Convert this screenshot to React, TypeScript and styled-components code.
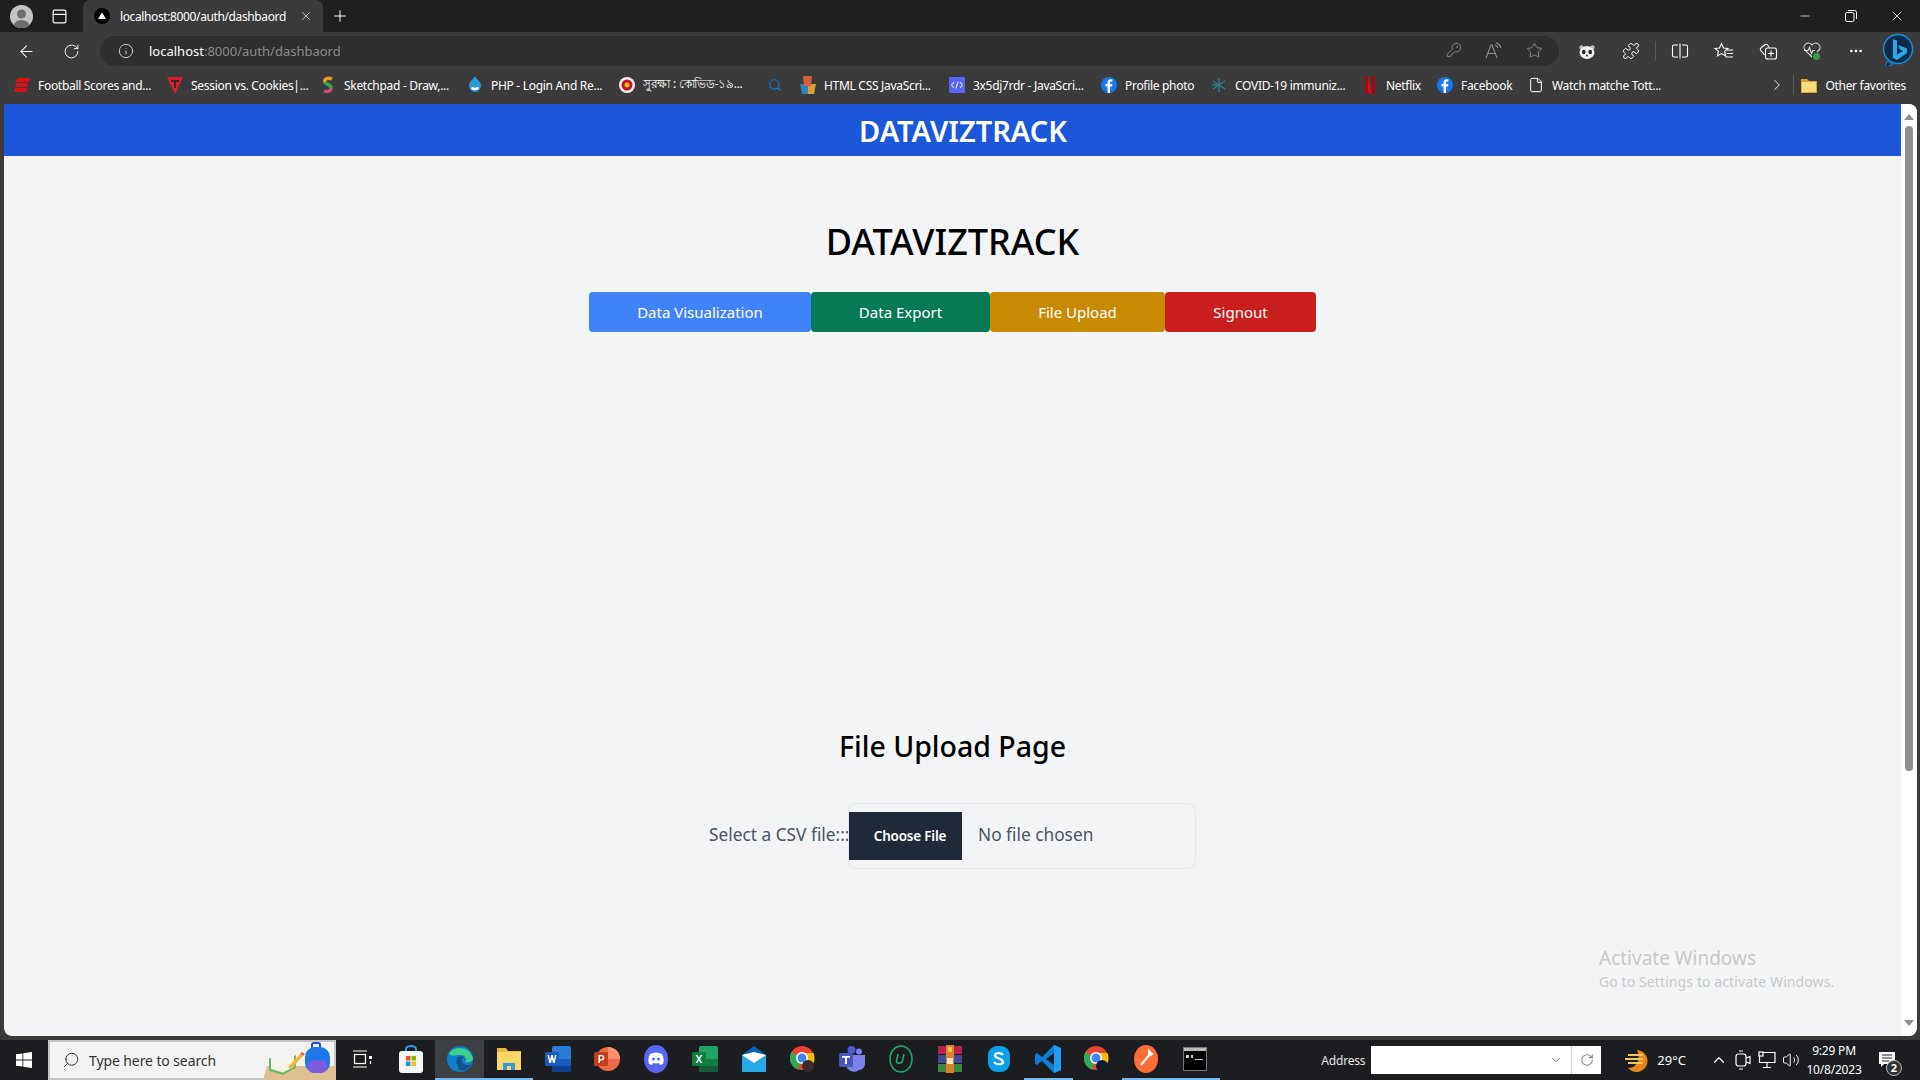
import React from "react";
import styled, { createGlobalStyle } from "styled-components";
import {
  ArrowLeft, RotateCw, Info, KeyRound, Star, Puzzle, Plus, X, Minus, ChevronRight, ChevronDown, ChevronUp,
  Search, File, Volume2, Ellipsis, PanelTop,
} from "lucide-react";

const GlobalStyle = createGlobalStyle`
  html, body { margin: 0; padding: 0; height: 100%; overflow: hidden; background: #3b3b3b; }
  * { box-sizing: border-box; }
  body { font-family: "Noto Sans", "Open Sans", Arial, sans-serif; }
`;

const Window = styled.div`
  width: 1920px;
  height: 1080px;
  display: flex;
  flex-direction: column;
  background: #3b3b3b;
  color: #fff;
`;

/* tab strip */
const TabStrip = styled.div`
  height: 32px;
  display: flex;
  align-items: flex-end;
  background: #1f1f1f;
`;
const StripLeft = styled.div`
  width: 83px;
  height: 32px;
  display: flex;
  align-items: center;
  padding-left: 10px;
  gap: 18px;
`;
const Avatar = styled.div`
  width: 23px;
  height: 23px;
  border-radius: 50%;
  overflow: hidden;
  background: #c4c4c4;
`;
const Tab = styled.div`
  width: 240px;
  height: 32px;
  display: flex;
  align-items: center;
  padding: 0 10px 0 11px;
  background: #3b3b3b;
  border-radius: 7px 7px 0 0;
  font-size: 12px;
`;
const TabTitle = styled.span`
  flex: 1;
  margin-left: 10px;
  letter-spacing: -0.38px;
  white-space: nowrap;
`;
const NewTab = styled.div`
  width: 34px;
  height: 32px;
  display: flex;
  align-items: center;
  justify-content: center;
`;
const WindowControls = styled.div`
  margin-left: auto;
  height: 32px;
  display: flex;
  align-items: center;
`;
const WinBtn = styled.div`
  width: 46px;
  display: flex;
  justify-content: center;
`;

/* toolbar */
const Toolbar = styled.div`
  height: 34px;
  display: flex;
  align-items: flex-end;
  padding-left: 4px;
  background: #3b3b3b;
`;
const NavBtn = styled.div`
  width: 45px;
  height: 30px;
  display: flex;
  align-items: center;
  justify-content: center;
`;
const AddressBar = styled.div`
  width: 1459px;
  height: 30px;
  margin-left: 6px;
  display: flex;
  align-items: center;
  padding: 0 5px 0 18px;
  border-radius: 15px;
  background: #2e2e2e;
`;
const Url = styled.div`
  margin-left: 15px;
  font-size: 13px;
  color: #8c8c8c;
  white-space: nowrap;
  b { font-weight: 400; color: #fff; }
`;
const AddressTools = styled.div`
  margin-left: auto;
  display: flex;
`;
const AddrBtn = styled.div`
  width: 40px;
  display: flex;
  justify-content: center;
  color: #8e8e8e;
`;
const ToolGroup = styled.div`
  display: flex;
  align-items: center;
  height: 30px;
  margin-left: 6px;
`;
const ToolBtn = styled.div<{ $w?: number }>`
  width: ${(p) => p.$w ?? 44}px;
  display: flex;
  justify-content: center;
  align-items: center;
`;
const ToolSep = styled.div`
  width: 1px;
  height: 20px;
  margin: 0 2px;
  background: #5a5a5a;
`;

/* bookmarks */
const Bookmarks = styled.div`
  height: 38px;
  display: flex;
  align-items: center;
  padding: 0 14px;
  background: #3b3b3b;
`;
const Bookmark = styled.div<{ $w?: number }>`
  width: ${(p) => (p.$w ? `${p.$w}px` : "auto")};
  flex: none;
  display: flex;
  align-items: center;
  gap: 8px;
  font-size: 12px;
  letter-spacing: -0.3px;
  white-space: nowrap;
`;
const BookmarkRight = styled.div`
  margin-left: auto;
  display: flex;
  align-items: center;
`;
const BarSep = styled.div`
  width: 1px;
  height: 20px;
  margin: 0 7px;
  background: #5a5a5a;
`;

/* page */
const Viewport = styled.div`
  height: 932px;
  margin: 0 3px 0 4px;
  display: flex;
  overflow: hidden;
  border-radius: 0 8px 8px 8px;
  background: #f3f4f6;
  position: relative;
`;
const Page = styled.main`
  flex: 1;
  display: flex;
  flex-direction: column;
  align-items: center;
  color: #000;
`;
const Header = styled.header`
  width: 100%;
  height: 52px;
  display: flex;
  align-items: center;
  justify-content: center;
  padding-left: 21px;
  background: #1c57d9;
  color: #fff;
  font-size: 29px;
  font-weight: 600;
`;
const Title = styled.h1`
  margin: 61px 0 0;
  height: 50px;
  line-height: 50px;
  font-size: 36px;
  font-weight: 500;
`;
const Nav = styled.nav`
  display: flex;
  margin-top: 25px;
`;
const NavButton = styled.button<{ $bg: string; $w: number }>`
  width: ${(p) => p.$w}px;
  height: 40px;
  border: 0;
  border-radius: 4px;
  background: ${(p) => p.$bg};
  color: #fff;
  font-family: inherit;
  font-size: 15px;
`;
const UploadTitle = styled.h2`
  margin: 394px 0 0;
  height: 40px;
  line-height: 40px;
  font-size: 28.5px;
  font-weight: 500;
`;
const UploadRow = styled.div`
  display: flex;
  align-items: center;
  margin-top: 37px;
  color: #4b5563;
  font-size: 17.3px;
`;
const CsvLabel = styled.label`
  width: 139px;
  padding-bottom: 3px;
  white-space: nowrap;
`;
const FileBox = styled.div`
  width: 348px;
  height: 66px;
  display: flex;
  align-items: center;
  border: 1px solid #e5e7eb;
  border-radius: 8px;
`;
const ChooseButton = styled.div`
  width: 113px;
  height: 48px;
  display: flex;
  align-items: center;
  justify-content: center;
  padding-left: 9px;
  background: #1f2937;
  color: #fff;
  font-size: 13.5px;
  font-weight: 600;
  letter-spacing: -0.2px;
`;
const NoFile = styled.span`
  margin-left: 16px;
  padding-bottom: 3px;
`;
const Scrollbar = styled.div`
  width: 16px;
  display: flex;
  flex-direction: column;
  align-items: center;
  background: #fff;
  border-radius: 0 8px 8px 0;
`;
const ScrollThumb = styled.div`
  width: 8px;
  height: 645px;
  margin-top: 6px;
  border-radius: 4px;
  background: #8f8f8f;
`;
const ArrowUp = styled.div`
  margin-top: 10px;
  border: 5px solid transparent;
  border-top: 0;
  border-bottom: 6px solid #8f8f8f;
`;
const ArrowDown = styled.div`
  margin-top: auto;
  margin-bottom: 10px;
  border: 5px solid transparent;
  border-bottom: 0;
  border-top: 6px solid #8f8f8f;
`;
const Watermark = styled.div`
  position: absolute;
  left: 1595px;
  top: 841px;
  color: #c6c8cb;
  font-size: 14px;
  letter-spacing: 0.1px;
  line-height: 19px;
  strong { display: block; font-weight: 400; font-size: 19px; letter-spacing: 0; line-height: 27px; }
`;

/* taskbar */
const Taskbar = styled.footer`
  height: 40px;
  margin-top: 4px;
  display: flex;
  align-items: center;
  background: #1b1d20;
`;
const Start = styled.div`
  width: 48px;
  display: flex;
  justify-content: center;
`;
const SearchBox = styled.div`
  width: 288px;
  height: 40px;
  display: flex;
  align-items: center;
  padding-left: 12px;
  gap: 9px;
  background: #f2f2f2;
  border: 2px solid #c4c4c4;
  color: #333;
  font-size: 14px;
  letter-spacing: -0.1px;
  position: relative;
`;
const SearchArt = styled.svg`
  position: absolute;
  right: -2px;
  bottom: -2px;
`;
const Apps = styled.div`
  display: flex;
  margin-left: 1px;
`;
const AppSlot = styled.div<{ $running?: boolean; $current?: boolean }>`
  width: 49.06px;
  height: 40px;
  display: flex;
  align-items: center;
  justify-content: center;
  background: ${(p) => (p.$current ? "#3e4144" : "transparent")};
  border-bottom: 2px solid ${(p) => (p.$running ? "#76b9ed" : "transparent")};
`;
const Tray = styled.div`
  margin-left: auto;
  display: flex;
  align-items: center;
  height: 40px;
`;
const AddressLabel = styled.span`
  font-size: 12px;
  letter-spacing: -0.2px;
  color: #e4e4e4;
  margin-right: 6px;
`;
const AddressInput = styled.div`
  width: 230px;
  height: 28px;
  display: flex;
  align-items: center;
  background: #fff;
  color: #555;
`;
const AddressDrop = styled.div`
  flex: 1;
  display: flex;
  justify-content: flex-end;
  padding-right: 8px;
`;
const AddressRefresh = styled.div`
  width: 30px;
  height: 28px;
  display: flex;
  align-items: center;
  justify-content: center;
  border-left: 1px solid #d9d9d9;
`;
const Weather = styled.div`
  display: flex;
  align-items: center;
  gap: 8px;
  margin-left: 24px;
  font-size: 13px;
`;
const TrayIcons = styled.div`
  display: flex;
  align-items: center;
  gap: 6px;
  margin-left: 24px;
`;
const Clock = styled.div`
  width: 70px;
  margin-left: -1px;
  text-align: center;
  font-size: 12px;
  letter-spacing: -0.2px;
  line-height: 19px;
`;
const Notify = styled.div`
  width: 40px;
  margin-right: 11px;
  position: relative;
  display: flex;
  justify-content: center;
  padding-right: 4px;
`;
const NotifyBadge = styled.span`
  position: absolute;
  left: 17px;
  top: 8px;
  width: 16px;
  height: 16px;
  border-radius: 50%;
  background: #333;
  border: 1px solid #bbb;
  font-size: 11px;
  font-weight: 700;
  line-height: 14px;
  text-align: center;
`;

/* favicons and logos */
const Fb = () => (
  <svg width="16" height="16" viewBox="0 0 16 16"><circle cx="8" cy="8" r="8" fill="#1877f2" /><path d="M9 16V9.5h2l.4-2.4H9V5.8c0-.8.3-1.2 1.2-1.2h1.2V2.5C11 2.4 10.3 2.3 9.700 2.300 7.800 2.300 6.600 3.400 6.600 5.500v1.600H4.500v2.400h2.100V16z" fill="#fff" /></svg>
);
const Espn = () => (
  <svg width="16" height="16" viewBox="0 0 16 16"><path d="M3 1h13l-1 4H2zM2 6h12l-.6 4H1zM1 11h12l-.8 4H0z" fill="#d8121a" /></svg>
);
const TIcon = () => (
  <svg width="16" height="18" viewBox="0 0 16 18"><path d="M0 1h16L8 18z" fill="#e01b2b" /><path d="M4 4h8v2H9v6H7V6H4z" fill="#2b2b2b" /></svg>
);
const Sketch = () => (
  <svg width="16" height="18" viewBox="0 0 16 18" fill="none" strokeWidth="3.500"><path d="M12 3C8 1 4 3 5 6" stroke="#e8a020" /><path d="M5 6c1 3 6 2 6 6" stroke="#3aa655" /><path d="M11 12c0 4-5 4-7 3" stroke="#d04a7a" /></svg>
);
const Drupal = () => (
  <svg width="16" height="18" viewBox="0 0 16 18"><path d="M8 0c1 3 6 5 6 10A6 6 0 0 1 2 10C2 5 7 3 8 0z" fill="#2b9bd7" /><path d="M4 12c2-2 3 0 4 0s2-2 4 0c-1 3-7 3-8 0z" fill="#fff" /></svg>
);
const Corona = () => (
  <svg width="16" height="16" viewBox="0 0 16 16"><circle cx="8" cy="8" r="8" fill="#f0f0f0" /><circle cx="8" cy="8" r="5.500" fill="#c8102e" /><circle cx="8" cy="8" r="2.500" fill="#f4c20d" /></svg>
);
const Html = () => (
  <svg width="16" height="18" viewBox="0 0 16 18"><path d="M0 8h9v10H2z" fill="#2f7fc1" /><path d="M8 8h8l-2 10H8z" fill="#d9a036" /><path d="M3 0h9l-1 10H4z" fill="#d4603c" /></svg>
);
const CodeIcon = () => (
  <svg width="16" height="16" viewBox="0 0 16 16"><rect width="16" height="16" rx="1" fill="#5865f2" /><path d="M5 5 2.500 8 5 11M11 5l2.500 3L11 11M9 4.500 7 11.500" stroke="#fff" fill="none" /></svg>
);
const Covid = () => (
  <svg width="16" height="16" viewBox="0 0 16 16" stroke="#2f7f8f" strokeWidth="1.400"><path d="M8 1v14M2 4l12 8M14 4 2 12M1 8h5" /></svg>
);
const Netflix = () => (
  <svg width="16" height="18" viewBox="0 0 16 18"><path d="M3 0h3l4 18H7z" fill="#e50914" /><path d="M3 0h3v17l-3 1zM10 0h3v18l-3-1z" fill="#a50710" /></svg>
);
const Folder = () => (
  <svg width="16" height="16" viewBox="0 0 16 16"><path d="M0 2h6l2 2h8v12H0z" fill="#d9a32e" /><rect x="1" y="5" width="14" height="10" fill="#f7dc7c" /></svg>
);
const Restore = () => (
  <svg width="12" height="12" viewBox="0 0 12 12" fill="none" stroke="#fff"><rect x=".5" y="2.500" width="8.500" height="9" rx="1.500" /><path d="M3 .5h6.500A2 2 0 0 1 11.500 2.500V9" /></svg>
);
const ReadAloud = () => (
  <svg width="18" height="18" viewBox="0 0 18 18" fill="none" stroke="#8e8e8e" strokeWidth="1.100"><path d="M1 16 6 3h1l5 13M3 11.500h7" /><path d="M10 3a5 5 0 0 1 3 3M11 .8a8 8 0 0 1 5 5" /></svg>
);
const Panda = () => (
  <svg width="18" height="16" viewBox="0 0 18 16"><circle cx="3.500" cy="4.500" r="2.200" fill="#bbb" /><circle cx="14.500" cy="4.500" r="2.200" fill="#bbb" /><ellipse cx="9" cy="9.500" rx="7.500" ry="6.500" fill="#eee" /><ellipse cx="5.800" cy="9" rx="1.800" ry="2.200" fill="#222" /><ellipse cx="12.200" cy="9" rx="1.800" ry="2.200" fill="#222" /><circle cx="9" cy="12.500" r=".9" fill="#222" /></svg>
);
const SplitScreen = () => (
  <svg width="18" height="18" viewBox="0 0 18 18" fill="none" stroke="#fff" strokeWidth="1.100"><path d="M7 3H3a1.500 1.500 0 0 0-1.500 1.500v9A1.500 1.500 0 0 0 3 15h4M11 3h4a1.500 1.500 0 0 1 1.500 1.500v9A1.500 1.500 0 0 1 15 15h-4M9 1.500v15" /></svg>
);
const Favorites = () => (
  <svg width="20" height="18" viewBox="0 0 20 18" fill="none" stroke="#fff" strokeWidth="1.100"><path d="M7.500 1.500 9.500 6l4.500.4-3.400 3 1 4.600-4.100-2.400L3.400 14l1-4.600L1 6.400 5.500 6zM13 8h6M12.500 11.500h6.500M11.500 15H19" /></svg>
);
const Collections = () => (
  <svg width="20" height="20" viewBox="0 0 20 20" fill="none" stroke="#fff" strokeWidth="1.100"><path d="M6.500 14 2.800 9.500a2 2 0 0 1 .3-2.800l3.700-3A2 2 0 0 1 9.500 4l2 2.500" /><rect x="7.500" y="7" width="11" height="11" rx="2" /><path d="M13 9.500v6M10 12.500h6" /></svg>
);
const Health = () => (
  <svg width="20" height="20" viewBox="0 0 20 20"><path d="M10 16 2.800 9A4.300 4.300 0 0 1 10 4a4.300 4.300 0 0 1 7.200 5L15 11" fill="none" stroke="#ddd" strokeWidth="1.100" /><path d="M2 9.500h4l1.500-3 2 6 1.500-3h2" fill="none" stroke="#ddd" strokeWidth="1.100" /><circle cx="14.500" cy="15.500" r="3.500" fill="#3a9a4a" /></svg>
);
const Bing = () => (
  <svg width="32" height="38" viewBox="0 0 32 38"><circle cx="16" cy="17" r="14.500" fill="#0c2a4a" stroke="#1c8ad6" strokeWidth="1.500" /><path d="M5 29 3 36l8-4z" fill="#0c2a4a" stroke="#1c8ad6" /><path d="M11 7l4 1.500v14l6-3.500-3-1.500-2-4.500 9 3.500v4.500L15 28l-4-2z" fill="#2aa7e6" /></svg>
);
const WinLogo = () => (
  <svg width="16" height="16" viewBox="0 0 16 16" fill="#fff"><path d="M0 2.300 6.500 1.400v6.200H0zM7.300 1.300 16 0v7.600H7.300zM0 8.400h6.500v6.200L0 13.700zM7.300 8.400H16V16l-8.700-1.200z" /></svg>
);
const Art = () => (
  <SearchArt width="78" height="38" viewBox="0 0 78 38">
    <path d="M5 38l4-14h69v14z" fill="#e0bf92" />
    <path d="M11 16l14 4 13-7v13l-13 7-14-4z" fill="#6fb86a" />
    <path d="M13 16l12 3.500 11-6v11l-11 6-12-3.500z" fill="#f4f4e8" />
    <path d="M30 25 42 12l3 2-12 13z" fill="#f2b632" />
    <path d="M42 12l2-2 3 2-2 2z" fill="#e8604c" />
    <rect x="54" y="1" width="8" height="6" rx="2" fill="none" stroke="#1c4fd0" strokeWidth="2" />
    <rect x="47" y="5" width="25" height="26" rx="10" fill="#1f78e8" />
    <rect x="50" y="18" width="19" height="13" rx="6" fill="#7e5ce0" />
  </SearchArt>
);
const TaskView = () => (
  <svg width="20" height="20" viewBox="0 0 20 20" fill="none" stroke="#fff" strokeWidth="1.200"><path d="M1 2h14M1 18h14" /><rect x="2.500" y="5.500" width="11" height="9" /><rect x="17" y="7" width="3" height="3" fill="#fff" stroke="none" /><path d="M18.500 12v3" /></svg>
);
const Store = () => (
  <svg width="24" height="28" viewBox="0 0 24 28"><path d="M7 7V4a5 3 0 0 1 10 0v3" stroke="#29a3e0" strokeWidth="2" fill="none" /><rect y="6" width="24" height="22" rx="3" fill="#f5f5f5" /><rect x="7" y="11" width="4.500" height="4.500" fill="#f25022" /><rect x="12.500" y="11" width="4.500" height="4.500" fill="#7fba00" /><rect x="7" y="16.500" width="4.500" height="4.500" fill="#00a4ef" /><rect x="12.500" y="16.500" width="4.500" height="4.500" fill="#ffb900" /></svg>
);
const Edge = () => (
  <svg width="26" height="26" viewBox="0 0 26 26"><circle cx="13" cy="13" r="13" fill="#0f7fc9" /><path d="M2 8C5 0 22-1 26 12c0 4-5 5-8 4 3-3 0-7-5-7-4 0-8 2-11-1z" fill="#3ccf8e" /><path d="M10 13c0-3 6-4 7-1-2 0-3 1-2 4 1 3 6 4 9 2-3 6-9 8-13 5 3 0-3-5-1-10z" fill="#1b4f8a" /></svg>
);
const Explorer = () => (
  <svg width="24" height="22" viewBox="0 0 24 22"><path d="M0 0h9l2 3h13v19H0z" fill="#e8b93c" /><rect y="4" width="24" height="18" fill="#f7d868" /><path d="M6 15h12v7H6z" fill="#3a9ad9" /><rect x="10" y="18" width="4" height="4" fill="#f7d868" /></svg>
);
const Word = () => (
  <svg width="26" height="26" viewBox="0 0 26 26"><rect x="7" width="19" height="26" rx="2" fill="#2b7cd3" /><rect x="7" y="13" width="19" height="7" fill="#185abd" /><rect x="7" y="20" width="19" height="6" fill="#103f91" /><rect y="6" width="14" height="14" rx="1.500" fill="#185abd" /><path d="M2.500 9h1.500l1 5 1.300-5h1.400l1.300 5 1-5h1.500l-1.800 8H8L7 12.500 6 17H4.300z" fill="#fff" /></svg>
);
const Ppt = () => (
  <svg width="26" height="26" viewBox="0 0 26 26"><circle cx="14" cy="13" r="12" fill="#ed6c47" /><path d="M14 1a12 12 0 0 1 12 12H14z" fill="#ff8f6b" /><rect x="0" y="6" width="14" height="14" rx="1.500" fill="#c43e1c" /><path d="M4.500 9h3a2.500 2.500 0 0 1 0 5.500H6V17H4.500zM6 10.300v2.900h1.300a1.450 1.450 0 0 0 0-2.900z" fill="#fff" /></svg>
);
const Discord = () => (
  <svg width="24" height="28" viewBox="0 0 24 28"><ellipse cx="12" cy="14" rx="12" ry="14" fill="#5865f2" /><path d="M6 9c4-2 8-2 12 0 2 4 2 7 1 10l-3 1-1-2c-2 .6-4 .6-6 0l-1 2-3-1C4 16 4 13 6 9z" fill="#fff" /><circle cx="9.500" cy="14" r="1.500" fill="#5865f2" /><circle cx="14.500" cy="14" r="1.500" fill="#5865f2" /></svg>
);
const Excel = () => (
  <svg width="26" height="26" viewBox="0 0 26 26"><rect x="7" width="19" height="26" rx="2" fill="#21a366" /><rect x="7" y="13" width="19" height="7" fill="#107c41" /><rect x="7" y="20" width="19" height="6" fill="#185c37" /><rect y="6" width="14" height="14" rx="1.500" fill="#107c41" /><path d="M3.500 9h1.800L7 11.800 8.700 9h1.800l-2.600 4 2.600 4H8.700L7 14.200 5.300 17H3.500l2.600-4z" fill="#fff" /></svg>
);
const Mail = () => (
  <svg width="24" height="26" viewBox="0 0 24 26"><path d="M12 0 24 9v17H0V9z" fill="#0364b8" /><rect y="9" width="24" height="17" fill="#28a8ea" /><path d="M0 9l12 8 12-8-12-3z" fill="#fff" /></svg>
);
const Chrome = ({ badge }: { badge: string }) => (
  <svg width="26" height="28" viewBox="0 0 26 28"><circle cx="12" cy="13" r="12" fill="#ea4335" /><path d="M12 13 1.500 7A12 12 0 0 0 8 24.500z" fill="#34a853" /><path d="M12 13l4 11.500A12 12 0 0 0 23.500 8H12z" fill="#fbbc05" /><circle cx="12" cy="13" r="6" fill="#fff" /><circle cx="12" cy="13" r="4.500" fill="#4285f4" /><circle cx="18" cy="21" r="6" fill={badge} /></svg>
);
const Teams = () => (
  <svg width="26" height="26" viewBox="0 0 26 26"><circle cx="20" cy="5.500" r="3" fill="#7b83eb" /><circle cx="12.500" cy="4" r="4" fill="#5059c9" /><path d="M7 9h19v9a6 6 0 0 1-6 6 8 8 0 0 1-13-6z" fill="#7b83eb" /><rect y="7" width="14" height="14" rx="1.500" fill="#4b53bc" /><path d="M3 10h8v1.800H8V18H6v-6.200H3z" fill="#fff" /></svg>
);
const UIcon = () => (
  <svg width="24" height="28" viewBox="0 0 24 28" fill="none"><ellipse cx="12" cy="14" rx="11" ry="13" stroke="#17b26a" strokeWidth="1.500" /><path d="M9 9l-1.500 7c-.5 3 5 3 6 0L15 9" stroke="#17b26a" strokeWidth="1.500" /></svg>
);
const Rar = () => (
  <svg width="24" height="28" viewBox="0 0 24 28"><rect y="1" width="24" height="8" fill="#b8234a" /><rect y="10" width="24" height="8" fill="#45479b" /><rect y="19" width="24" height="8" fill="#3a8a3e" /><rect x="8" y="0" width="8" height="28" fill="#d9822b" /><rect x="9" y="13" width="6" height="6" fill="#f4e4c8" /><rect x="10" y="2" width="4" height="5" fill="#f2c14e" /></svg>
);
const Skype = () => (
  <svg width="22" height="26" viewBox="0 0 22 26"><rect width="22" height="26" rx="9" fill="#0aa0e6" /><path d="M15 9c-1-2-7-3-8 0-1 4 8 3 8 7 0 3-7 3-9 0" stroke="#fff" strokeWidth="2.200" fill="none" /></svg>
);
const VsCode = () => (
  <svg width="26" height="28" viewBox="0 0 26 28"><path d="M19 0l7 3v22l-7 3L7 16l-5 4-2-1.500V9.500L2 8l5 4z" fill="#0e7ed0" /><path d="M19 8 11 14l8 6z" fill="#1b1d20" /><path d="M19 0l7 3v22l-7 3z" fill="#1f9cf0" /></svg>
);
const Postman = () => (
  <svg width="24" height="28" viewBox="0 0 24 28"><ellipse cx="12" cy="14" rx="12" ry="14" fill="#ff6c37" /><path d="M7 20 16 9M15 6l3 3-3 2z" stroke="#fff" strokeWidth="2" fill="#fff" /></svg>
);
const Cmd = () => (
  <svg width="24" height="24" viewBox="0 0 24 24"><rect x=".5" y=".5" width="23" height="23" fill="#000" stroke="#777" /><rect x="1" y="1" width="22" height="3" fill="#bbb" /><path d="M3 8h3v3H3zM8 8h2v3H8zM12 12h8v1h-8z" fill="#ccc" /></svg>
);
const WeatherIcon = () => (
  <svg width="24" height="26" viewBox="0 0 24 26"><path d="M12 3A11 11 0 1 1 3 21C12 21 16 12 12 3z" fill="#e8861a" /><path d="M3 7h15v2H3zM0 11h18v2H0zM3 15h15v2H3z" fill="#f6c860" /></svg>
);
const MeetNow = () => (
  <svg width="18" height="20" viewBox="0 0 18 20" fill="none" stroke="#fff" strokeWidth="1.200"><rect x="2" y="4" width="10" height="12" rx="2.500" /><path d="M12 8l4-1.500v7L12 12M5 1h4M5 19h4" /></svg>
);
const Network = () => (
  <svg width="18" height="18" viewBox="0 0 18 18" fill="none" stroke="#fff" strokeWidth="1.200"><path d="M5 1.500h12v10H1.500V5M9 11.500V16M5 16.500h8" /><rect x="1" y="1" width="4" height="4" /></svg>
);
const ActionCenter = () => (
  <svg width="16" height="16" viewBox="0 0 16 16"><path d="M0 0h16v12H5l-3 3v-3H0z" fill="#fff" /><path d="M3 3h10M3 6h10M3 9h7" stroke="#1b1d20" /></svg>
);

const bookmarks: [React.ReactNode, string, number][] = [
  [<Espn />, "Football Scores and...", 153],
  [<TIcon />, "Session vs. Cookies|...", 153],
  [<Sketch />, "Sketchpad - Draw,...", 147],
  [<Drupal />, "PHP - Login And Re...", 152],
  [<Corona />, "সুরক্ষা : কোভিড-১৯...", 149],
  [<Search size={14} color="#1a78c2" />, "", 32],
  [<Html />, "HTML CSS JavaScri...", 149],
  [<CodeIcon />, "3x5dj7rdr - JavaScri...", 152],
  [<Fb />, "Profile photo", 110],
  [<Covid />, "COVID-19 immuniz...", 151],
  [<Netflix />, "Netflix", 75],
  [<Fb />, "Facebook", 91],
  [<File size={16} strokeWidth={1.5} />, "Watch matche Tott...", 0],
];

const apps: { icon: React.ReactNode; running?: boolean; current?: boolean }[] = [
  { icon: <TaskView /> },
  { icon: <Store /> },
  { icon: <Edge />, running: true, current: true },
  { icon: <Explorer />, running: true },
  { icon: <Word /> },
  { icon: <Ppt /> },
  { icon: <Discord /> },
  { icon: <Excel /> },
  { icon: <Mail /> },
  { icon: <Chrome badge="#3a2a28" /> },
  { icon: <Teams /> },
  { icon: <UIcon /> },
  { icon: <Rar /> },
  { icon: <Skype /> },
  { icon: <VsCode />, running: true },
  { icon: <Chrome badge="#10202c" /> },
  { icon: <Postman />, running: true },
  { icon: <Cmd />, running: true },
];

export default function App() {
  return (
    <Window>
      <GlobalStyle />
      <TabStrip>
        <StripLeft>
          <Avatar>
            <svg width="23" height="23" viewBox="0 0 23 23"><circle cx="11.500" cy="9" r="4.500" fill="#6d6d6d" /><ellipse cx="11.500" cy="21" rx="8" ry="6" fill="#6d6d6d" /></svg>
          </Avatar>
          <PanelTop size={17} strokeWidth={1.6} />
        </StripLeft>
        <Tab>
          <svg width="16" height="16" viewBox="0 0 16 16"><circle cx="8" cy="8" r="8" fill="#000" /><path d="M8 4.500 12 11H4z" fill="#fff" /></svg>
          <TabTitle>localhost:8000/auth/dashbaord</TabTitle>
          <X size={14} strokeWidth={1.4} color="#ddd" />
        </Tab>
        <NewTab><Plus size={18} strokeWidth={1.3} /></NewTab>
        <WindowControls>
          <WinBtn><Minus size={14} strokeWidth={1.2} /></WinBtn>
          <WinBtn><Restore /></WinBtn>
          <WinBtn><X size={16} strokeWidth={1.2} /></WinBtn>
        </WindowControls>
      </TabStrip>

      <Toolbar>
        <NavBtn><ArrowLeft size={19} strokeWidth={1.3} /></NavBtn>
        <NavBtn><RotateCw size={17} strokeWidth={1.3} /></NavBtn>
        <AddressBar>
          <Info size={16} strokeWidth={1.3} color="#ddd" />
          <Url><b>localhost</b>:8000/auth/dashbaord</Url>
          <AddressTools>
            <AddrBtn><KeyRound size={16} strokeWidth={1.3} /></AddrBtn>
            <AddrBtn><ReadAloud /></AddrBtn>
            <AddrBtn><Star size={17} strokeWidth={1.3} /></AddrBtn>
          </AddressTools>
        </AddressBar>
        <ToolGroup>
          <ToolBtn><Panda /></ToolBtn>
          <ToolBtn><Puzzle size={18} strokeWidth={1.3} /></ToolBtn>
          <ToolSep />
          <ToolBtn><SplitScreen /></ToolBtn>
          <ToolBtn><Favorites /></ToolBtn>
          <ToolBtn><Collections /></ToolBtn>
          <ToolBtn><Health /></ToolBtn>
          <ToolBtn><Ellipsis size={16} /></ToolBtn>
          <ToolBtn $w={40}><Bing /></ToolBtn>
        </ToolGroup>
      </Toolbar>

      <Bookmarks>
        {bookmarks.map(([icon, label, w], i) => (
          <Bookmark key={i} $w={w || undefined}>{icon}{label && <span>{label}</span>}</Bookmark>
        ))}
        <BookmarkRight>
          <ChevronRight size={18} strokeWidth={1.2} />
          <BarSep />
          <Bookmark><Folder />Other favorites</Bookmark>
        </BookmarkRight>
      </Bookmarks>

      <Viewport>
        <Page>
          <Header>DATAVIZTRACK</Header>
          <Title>DATAVIZTRACK</Title>
          <Nav>
            <NavButton $bg="#3f83f8" $w={222}>Data Visualization</NavButton>
            <NavButton $bg="#057a55" $w={179}>Data Export</NavButton>
            <NavButton $bg="#c88a04" $w={175}>File Upload</NavButton>
            <NavButton $bg="#c81e1e" $w={151}>Signout</NavButton>
          </Nav>
          <UploadTitle>File Upload Page</UploadTitle>
          <UploadRow>
            <CsvLabel>Select a CSV file:::</CsvLabel>
            <FileBox>
              <ChooseButton>Choose File</ChooseButton>
              <NoFile>No file chosen</NoFile>
            </FileBox>
          </UploadRow>
        </Page>
        <Scrollbar>
          <ArrowUp />
          <ScrollThumb />
          <ArrowDown />
        </Scrollbar>
        <Watermark>
          <strong>Activate Windows</strong>
          Go to Settings to activate Windows.
        </Watermark>
      </Viewport>

      <Taskbar>
        <Start><WinLogo /></Start>
        <SearchBox>
          <Search size={18} strokeWidth={1.3} style={{ transform: "scaleX(-1)" }} />
          Type here to search
          <Art />
        </SearchBox>
        <Apps>
          {apps.map((a, i) => (
            <AppSlot key={i} $running={a.running} $current={a.current}>{a.icon}</AppSlot>
          ))}
        </Apps>
        <Tray>
          <AddressLabel>Address</AddressLabel>
          <AddressInput>
            <AddressDrop><ChevronDown size={14} strokeWidth={1.5} /></AddressDrop>
            <AddressRefresh><RotateCw size={14} strokeWidth={2} color="#888" /></AddressRefresh>
          </AddressInput>
          <Weather><WeatherIcon />29°C</Weather>
          <TrayIcons>
            <ChevronUp size={18} strokeWidth={1.5} />
            <MeetNow />
            <Network />
            <Volume2 size={18} strokeWidth={1.3} />
          </TrayIcons>
          <Clock>9:29 PM<br />10/8/2023</Clock>
          <Notify>
            <ActionCenter />
            <NotifyBadge>2</NotifyBadge>
          </Notify>
        </Tray>
      </Taskbar>
    </Window>
  );
}
